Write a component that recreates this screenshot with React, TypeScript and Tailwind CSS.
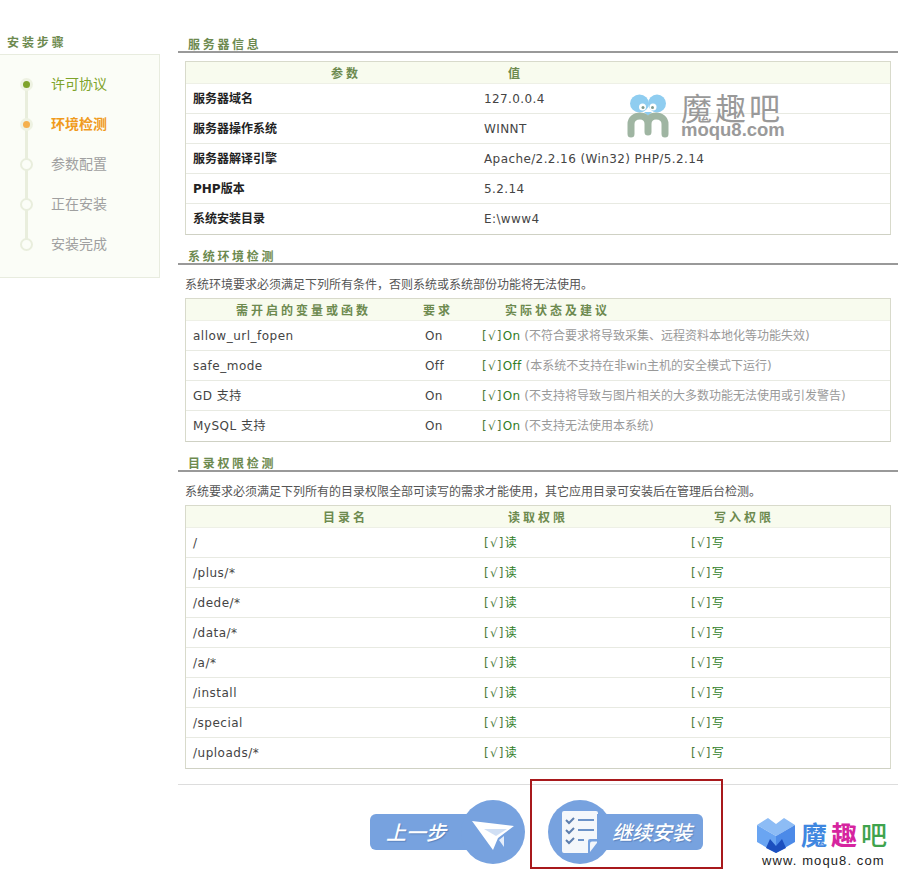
const steps = [
  { name: "许可协议", state: "done" },
  { name: "环境检测", state: "active" },
  { name: "参数配置", state: "todo" },
  { name: "正在安装", state: "todo" },
  { name: "安装完成", state: "todo" },
];

const serverRows = [
  ["服务器域名", "127.0.0.4"],
  ["服务器操作系统", "WINNT"],
  ["服务器解译引擎", "Apache/2.2.16 (Win32) PHP/5.2.14"],
  ["PHP版本", "5.2.14"],
  ["系统安装目录", "E:\\www4"],
];

const envRows = [
  ["allow_url_fopen", "On", "On", "(不符合要求将导致采集、远程资料本地化等功能失效)"],
  ["safe_mode", "Off", "Off", "(本系统不支持在非win主机的安全模式下运行)"],
  ["GD 支持", "On", "On", "(不支持将导致与图片相关的大多数功能无法使用或引发警告)"],
  ["MySQL 支持", "On", "On", "(不支持无法使用本系统)"],
];

const dirs = ["/", "/plus/*", "/dede/*", "/data/*", "/a/*", "/install", "/special", "/uploads/*"];

const SectionTitle = ({ text }: { text: string }) => (
  <div className="h-[30px] border-b-2 border-[#999999] flex items-end pl-[10px]">
    <span className="text-[12px] leading-[11px] font-bold tracking-[2.7px] text-[#6d8a4f]">{text}</span>
  </div>
);

const HeaderCell = ({ text, className }: { text: string; className: string }) => (
  <div className={"text-[12px] font-bold tracking-[3px] text-[#6d8a4f] pt-[2px] " + className}>{text}</div>
);

const Table = ({ head, children }: { head: React.ReactNode; children: React.ReactNode }) => (
  <div className="ml-[7px] w-[706px] border border-[#d8dacb] border-b-[#cfd1c4] bg-white">
    <div className="h-[22px] flex items-center bg-[#f8fbee] border-b border-[#eef0e6]">{head}</div>
    {children}
  </div>
);

const Row = ({ children, last }: { children: React.ReactNode; last?: boolean }) => (
  <div className={"h-[30px] flex items-center text-[12px] text-[#444444] " + (last ? "" : "border-b border-[#e8eae2]")}>
    {children}
  </div>
);

const Check = ({ label }: { label: string }) => (
  <span className="text-[#2f7d1f] tracking-[0.4px]">
    <span className="text-[#4d7a3a] tracking-[1.2px]">[√]</span>
    {label}
  </span>
);

const Watermark = () => (
  <div className="absolute left-[627px] top-[93px] flex items-start gap-[12px] pointer-events-none">
    <svg width="42" height="45" viewBox="0 0 42 45">
      <ellipse cx="12.500" cy="10.500" rx="9.500" ry="9" fill="#8fcdf0" />
      <ellipse cx="30" cy="10.500" rx="9" ry="9" fill="#8fcdf0" />
      <path d="M17 19L21 23L25 19Z" fill="#8fcdf0" />
      <circle cx="15.500" cy="14" r="3.500" fill="#ffffff" />
      <circle cx="26" cy="14" r="3.500" fill="#ffffff" />
      <circle cx="16" cy="14.500" r="1.500" fill="#7f9a8c" />
      <circle cx="25.500" cy="14.500" r="1.500" fill="#7f9a8c" />
      <path d="M4 41V31C4 26 8 23 13 23C18 23 21 26 21 31V39M21 31C21 26 24 23 29 23C34 23 38 26 38 31V41" fill="none" stroke="#9fb5a2" strokeWidth="7" strokeLinecap="round" />
    </svg>
    <div className="flex flex-col -mt-[1px]">
      <span className="text-[31px] leading-[30px] tracking-[3px] text-[#999999] font-['Noto_Sans_CJK_SC',sans-serif]">魔趣吧</span>
      <span className="text-[18.500px] leading-[16px] font-bold text-[#9a9a9a] font-['Liberation_Sans',sans-serif]">moqu8.com</span>
    </div>
  </div>
);

const PrevButton = () => (
  <div className="flex items-center">
    <div className="w-[106px] h-[36px] bg-[#77a2df] rounded-l-[6px] flex items-center pl-[16px] pt-[2px] text-[20px] font-medium italic text-white -mr-[15px] [text-shadow:1px_1px_1px_#5b83bd]">
      上一步
    </div>
    <div className="w-[64px] h-[64px] rounded-full bg-[#77a2df] flex items-center justify-center">
      <svg className="mt-[9px]" width="42" height="30" viewBox="0 0 42 30">
        <path d="M0 0L42 5L26 17L21 29Z" fill="#ffffff" />
        <path d="M12 8L35 8L24 15Z" fill="#77a2df" opacity="0.35" />
        <path d="M27 19L32 26L32 15Z" fill="#e6eefa" />
      </svg>
    </div>
  </div>
);

const NextButton = () => (
  <div className="relative flex items-center">
    <div className="w-[64px] h-[64px] rounded-full bg-[#77a2df] flex items-center justify-center">
      <svg width="36" height="42" viewBox="0 0 36 42">
        <path d="M2 0H34Q36 0 36 2V28H28Q26 28 26 30V42H2Q0 42 0 40V2Q0 0 2 0Z" fill="#f4f7fb" />
        <path d="M36 30.500L28 41V32.500Q28 30.500 30 30.500Z" fill="#f4f7fb" />
        <g fill="none" strokeWidth="2">
          <path d="M4 9L7 12L12 7M4 19L7 22L12 17M4 29L7 32L12 27" stroke="#5d7fae" />
          <path d="M16 9H32M16 19H32M16 29H22" stroke="#6b92c8" />
        </g>
      </svg>
    </div>
    <div className="w-[106px] h-[36px] bg-[#77a2df] rounded-r-[6px] -ml-[15px] flex items-center pl-[15px] pt-[2px] text-[20px] font-medium italic text-white whitespace-nowrap [text-shadow:1px_1px_1px_#5b83bd]">
      继续安装
    </div>
    <div className="absolute left-[-18px] top-[-21px] w-[193px] h-[90px] border-2 border-[#a8191c] pointer-events-none" />
  </div>
);

const FooterLogo = () => (
  <div className="self-start flex flex-col ml-[31px] mt-[29px]">
    <div className="flex items-center h-[36px]">
      <svg width="38" height="36" viewBox="0 0 38 36">
        <path d="M0 7L11 0L19 6L27 0L38 7L19 18Z" fill="#8dbcf5" />
        <path d="M0 7L19 18V35L0 24Z" fill="#6aa5f2" />
        <path d="M38 7L19 18V35L38 24Z" fill="#4c8ae8" />
        <path d="M9 30L13 21L19 28L25 21L29 30L19 35Z" fill="#1c4fbf" />
      </svg>
      <span className="ml-[6px] text-[26px] leading-[30px] font-bold tracking-[4px] text-[#3f87e0]">魔</span>
      <span className="text-[26px] leading-[30px] font-bold tracking-[4px] text-[#d6249f]">趣</span>
      <span className="text-[26px] leading-[30px] font-medium text-[#3fa34d]">吧</span>
    </div>
    <span className="ml-[5px] text-[13px] leading-[14px] tracking-[1.1px] text-[#222222] font-['Liberation_Sans',sans-serif] whitespace-nowrap">www. moqu8. com</span>
  </div>
);

export default function App() {
  return (
    <div className="relative w-[903px] h-[874px] overflow-hidden bg-white flex font-['DejaVu_Sans','Noto_Sans_CJK_SC',sans-serif]">
      <aside className="w-[160px] shrink-0">
        <div className="h-[54px] flex items-end pb-[2px] pl-[7px] text-[12px] font-bold tracking-[2.9px] text-[#6d8a4f]">
          安装步骤
        </div>
        <div className="relative h-[224px] bg-[#fbfdf7] border border-l-0 border-[#e8ecdf] pt-[9px]">
          <div className="absolute left-[25px] top-[30px] w-[3px] h-[160px] bg-[#e9eedd]" />
          {steps.map((s) => (
            <div key={s.name} className="relative h-[40px] flex items-center">
              <div
                className={
                  "ml-[20px] w-[13px] h-[13px] rounded-full flex items-center justify-center " +
                  (s.state === "todo" ? "bg-[#fbfdf7] border-2 border-[#e9eedd]" : "bg-[#eef2e2]")
                }
              >
                {s.state === "done" && <div className="w-[7px] h-[7px] rounded-full bg-[#7ea32a]" />}
                {s.state === "active" && <div className="w-[7px] h-[7px] rounded-full bg-[#f5b04c]" />}
              </div>
              <span
                className={
                  "ml-[18px] text-[14px] " +
                  (s.state === "done"
                    ? "text-[#7ea32a]"
                    : s.state === "active"
                      ? "font-bold text-[#f09a1c]"
                      : "text-[#a0a0a0]")
                }
              >
                {s.name}
              </span>
            </div>
          ))}
        </div>
      </aside>

      <main className="ml-[18px] w-[720px] shrink-0 pt-[23px]">
        <SectionTitle text="服务器信息" />
        <div className="h-[8px]" />
        <Table
          head={
            <>
              <HeaderCell text="参数" className="w-[322px] pl-[145px]" />
              <HeaderCell text="值" className="pl-0" />
            </>
          }
        >
          {serverRows.map((r, i) => (
            <Row key={r[0]} last={i === serverRows.length - 1}>
              <div className="w-[298px] pl-[7px] font-bold text-[#222222]">{r[0]}</div>
              <div className="tracking-[0.4px]">{r[1]}</div>
            </Row>
          ))}
        </Table>

        <SectionTitle text="系统环境检测" />
        <div className="h-[33px] pt-[12px] pl-[7px] text-[12px] leading-[16px] text-[#555555]">
          系统环境要求必须满足下列所有条件，否则系统或系统部份功能将无法使用。
        </div>
        <Table
          head={
            <>
              <HeaderCell text="需开启的变量或函数" className="w-[237px] pl-[50px]" />
              <HeaderCell text="要求" className="w-[82px]" />
              <HeaderCell text="实际状态及建议" />
            </>
          }
        >
          {envRows.map((r, i) => (
            <Row key={r[0]} last={i === envRows.length - 1}>
              <div className="w-[239px] pl-[7px] tracking-[0.5px]">{r[0]}</div>
              <div className="w-[57px] tracking-[0.4px]">{r[1]}</div>
              <div className="whitespace-nowrap">
                <Check label={r[2]} /> <span className="text-[#999999]">{r[3]}</span>
              </div>
            </Row>
          ))}
        </Table>

        <SectionTitle text="目录权限检测" />
        <div className="h-[33px] pt-[12px] pl-[7px] text-[12px] leading-[16px] text-[#555555]">
          系统要求必须满足下列所有的目录权限全部可读写的需求才能使用，其它应用目录可安装后在管理后台检测。
        </div>
        <Table
          head={
            <>
              <HeaderCell text="目录名" className="w-[322px] pl-[137px]" />
              <HeaderCell text="读取权限" className="w-[206px]" />
              <HeaderCell text="写入权限" />
            </>
          }
        >
          {dirs.map((d, i) => (
            <Row key={d} last={i === dirs.length - 1}>
              <div className="w-[298px] pl-[7px] tracking-[0.5px]">{d}</div>
              <div className="w-[207px]">
                <Check label="读" />
              </div>
              <div>
                <Check label="写" />
              </div>
            </Row>
          ))}
        </Table>

        <div className="mt-[15px] border-t border-[#dddddd] h-[90px] pt-[4px] pl-[192px] flex items-center gap-[23px]">
          <PrevButton />
          <NextButton />
          <FooterLogo />
        </div>
      </main>

      <Watermark />
    </div>
  );
}
